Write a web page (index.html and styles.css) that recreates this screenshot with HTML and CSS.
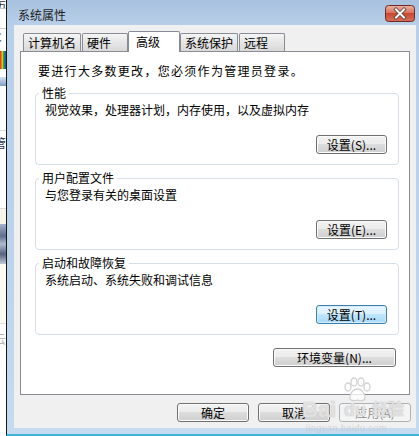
FILE: index.html
```html
<!DOCTYPE html>
<html lang="zh-CN">
<head>
<meta charset="utf-8">
<title>系统属性</title>
<link rel="stylesheet" href="styles.css">
</head>
<body>
<div class="screen">
  <div class="bgstrip">
    <div class="bg bg-a"><span class="cut">历</span></div>
    <div class="bg bg-b"></div>
    <div class="bg bg-c"><span class="cut">C</span></div>
    <div class="bg bg-d"></div>
    <div class="bg bg-e"></div>
    <div class="bg bg-f"></div>
    <div class="bg bg-g"></div>
    <div class="bg bg-h"><span class="cut blue">管</span></div>
    <div class="bg bg-i"></div>
    <div class="bg bg-j"></div>
    <div class="bg bg-k"></div>
    <div class="bg bg-l"></div>
    <div class="bg bg-m"><span class="cut gray">云</span></div>
  </div>
  <div class="window">
    <div class="titlebar">
      <span class="title">系统属性</span>
      <span class="close">
        <svg width="30" height="17" viewBox="0 0 30 17">
          <defs>
            <linearGradient id="cg" x1="0" y1="0" x2="0" y2="1">
              <stop offset="0" stop-color="#eab3a6"/>
              <stop offset="0.45" stop-color="#d9735f"/>
              <stop offset="0.5" stop-color="#c44a33"/>
              <stop offset="1" stop-color="#d5705b"/>
            </linearGradient>
          </defs>
          <rect x="0.5" y="0.5" width="29" height="16" rx="3" fill="url(#cg)" stroke="#6e2b22"/>
          <path d="M11 4.5 L19 12.5 M19 4.5 L11 12.5" stroke="#5a3a36" stroke-width="3.6" stroke-linecap="square"/>
          <path d="M11 4.5 L19 12.5 M19 4.5 L11 12.5" stroke="#ffffff" stroke-width="2" stroke-linecap="square"/>
        </svg>
      </span>
    </div>
    <div class="client">
      <div class="tabs">
        <div class="tab">计算机名</div>
        <div class="tab">硬件</div>
        <div class="tab active">高级</div>
        <div class="tab">系统保护</div>
        <div class="tab">远程</div>
      </div>
      <div class="panel">
        <p class="intro">要进行大多数更改，您必须作为管理员登录。</p>
        <fieldset class="group">
          <legend>性能</legend>
          <p class="desc">视觉效果，处理器计划，内存使用，以及虚拟内存</p>
          <div class="row"><span class="btn">设置(S)...</span></div>
        </fieldset>
        <fieldset class="group">
          <legend>用户配置文件</legend>
          <p class="desc">与您登录有关的桌面设置</p>
          <div class="row"><span class="btn">设置(E)...</span></div>
        </fieldset>
        <fieldset class="group">
          <legend>启动和故障恢复</legend>
          <p class="desc">系统启动、系统失败和调试信息</p>
          <div class="row"><span class="btn focus">设置(T)...</span></div>
        </fieldset>
        <div class="row env"><span class="btn wide">环境变量(N)...</span></div>
      </div>
      <div class="footer">
        <span class="btn">确定</span>
        <span class="btn">取消</span>
        <span class="btn disabled">应用(A)</span>
      </div>
      <div class="watermark">
        <span class="wm-bai">Bai</span>
        <svg class="wm-paw" width="30" height="26" viewBox="0 0 30 26">
          <g fill="rgba(255,255,255,0.75)" stroke="#d2d2d2" stroke-width="1.3">
            <ellipse cx="6" cy="10" rx="3" ry="4"/>
            <ellipse cx="12" cy="5" rx="3" ry="4"/>
            <ellipse cx="19" cy="5" rx="3" ry="4"/>
            <ellipse cx="25" cy="10" rx="3" ry="4"/>
            <path d="M8 21 C8 15 12 12 15.5 12 C19 12 23 15 23 21 C23 24 19 24 15.5 23 C12 24 8 24 8 21 Z"/>
          </g>
        </svg>
        <span class="wm-du">du</span>
        <span class="wm-jy">经验</span>
        <span class="wm-url">jingyan.baidu.com</span>
      </div>
    </div>
  </div>
</div>
</body>
</html>
```

FILE: styles.css
```css
* {
  box-sizing: border-box;
}

html, body {
  margin: 0;
  padding: 0;
}

body {
  width: 419px;
  height: 436px;
  overflow: hidden;
  background: #ffffff;
  color: #000000;
  font-family: "Noto Sans CJK SC", "Liberation Sans", sans-serif;
  font-size: 12px;
}

.screen {
  display: flex;
  height: 436px;
}

/* background window fragment on the left */
.bgstrip {
  width: 6px;
  display: flex;
  flex-direction: column;
  overflow: hidden;
  background: #ffffff;
}

.bg {
  flex: none;
  overflow: hidden;
}

.cut {
  display: block;
  margin-left: -6px;
  font-size: 12px;
  line-height: 12px;
  color: #333;
}

.cut.blue { color: #1d3050; }
.cut.gray { color: #b5b5b5; }

.bg-a { height: 9px; border-bottom: 1px solid #c9c9c9; }
.bg-b { height: 20px; border-bottom: 1px solid #d0d0d0; }
.bg-c { height: 22px; padding-top: 2px; }
.bg-d { height: 18px; background: linear-gradient(90deg, #d8261b 0, #f0c419 40%, #29a73d 60%, #2146b9 100%); }
.bg-e { height: 8px; }
.bg-f { height: 9px; background: linear-gradient(#d9e4f1, #7f9cc2); }
.bg-g { height: 45px; border-bottom: 1px solid #d7d7d7; }
.bg-h { height: 78px; padding-top: 6px; border-bottom: 1px solid #dcdcdc; }
.bg-i { height: 15px; background: #f7f5ea; }
.bg-j { height: 40px; background: linear-gradient(#a6b3c8, #5f6f8c 30%, #b0bccd 50%, #56637c 75%, #c2cad8); }
.bg-k { height: 60px; background: #fbfaf2; border-bottom: 1px solid #dedede; }
.bg-l { height: 9px; }
.bg-m { height: 120px; }

/* window */
.window {
  flex: 1;
  display: flex;
  flex-direction: column;
  border-left: 1px solid #161616;
  border-bottom: 2px solid #3fb4d6;
  padding: 0 3px 6px 7px;
  background: linear-gradient(180deg, #a8c1de 0, #b7cfe9 25px, #bcd3ec 60%, #c6dbf0 100%);
}

.titlebar {
  height: 25px;
  display: flex;
  justify-content: space-between;
  align-items: flex-start;
  margin: 0 -3px 0 0;
  padding: 0 4px 0 4px;
  flex: none;
}

.title {
  margin-top: 7px;
  line-height: 15px;
  font-size: 12px;
  color: #1e1e1e;
}

.close {
  display: block;
  width: 30px;
  height: 17px;
  margin-top: 5px;
}

.close svg {
  display: block;
}

.client {
  position: relative;
  flex: 1;
  display: flex;
  flex-direction: column;
  background: #f0f0f0;
  padding: 6px 6px 0 6px;
}

/* tabs */
.tabs {
  height: 20px;
  display: flex;
  align-items: flex-end;
  padding-left: 3px;
  flex: none;
}

.tab {
  height: 18px;
  min-width: 46px;
  padding: 1px 4px 0 4px;
  margin-right: 1px;
  border: 1px solid #898c95;
  border-bottom: 0;
  border-radius: 2px 2px 0 0;
  background: linear-gradient(#f5f5f5, #e6e6e6 50%, #d9d9d9);
  line-height: 15px;
  white-space: nowrap;
}

.tab.active {
  position: relative;
  z-index: 1;
  height: 21px;
  min-width: 52px;
  margin: 0 0 -1px -1px;
  padding: 2px 7px 0 7px;
  background: #ffffff;
}

/* panel */
.panel {
  height: 344px;
  flex: none;
  border: 1px solid #898c95;
  background: #ffffff;
  padding: 11px 10px 0 14px;
  display: flex;
  flex-direction: column;
}

.intro {
  margin: 0 0 2px 3px;
  line-height: 15px;
  letter-spacing: 1.3px;
}

.group {
  margin: 7px 0 0 0;
  min-width: 0;
  border: 1px solid #d5dfe5;
  border-radius: 4px;
  padding: 0 11px 10px 9px;
}

.group legend {
  margin-left: -6px;
  padding: 0 3px;
  line-height: 12px;
  font-size: 12px;
}

.desc {
  margin: 3px 0 0 0;
  line-height: 15px;
}

.row {
  display: flex;
  justify-content: flex-end;
  margin-top: 18px;
}

.row.env {
  margin-top: 13px;
  padding-right: 3px;
}

/* buttons */
.btn {
  display: block;
  width: 71px;
  height: 19px;
  border: 1px solid #707070;
  border-radius: 3px;
  background: linear-gradient(#f2f2f2 0%, #ebebeb 50%, #dddddd 50%, #cfcfcf 100%);
  box-shadow: inset 0 0 0 1px #fbfbfb;
  text-align: center;
  line-height: 17px;
  font-size: 12px;
  white-space: nowrap;
}

.btn.wide {
  width: 123px;
}

.btn.focus {
  border-color: #3c7fb1;
  background: linear-gradient(#eaf6fd 0%, #d9f0fc 50%, #bee6fd 50%, #a7d9f5 100%);
  box-shadow: inset 0 0 0 1px #d6eefb;
}

.btn.disabled {
  border-color: #adb2b5;
  background: #f4f4f4;
  box-shadow: none;
  color: #8d8d8d;
}

.footer {
  display: flex;
  justify-content: flex-end;
  gap: 9px;
  margin: 8px -1px 0 0;
}

.footer .btn {
  width: 72px;
}

/* watermark overlay */
.watermark {
  position: absolute;
  left: 286px;
  top: 350px;
  width: 110px;
  height: 52px;
  pointer-events: none;
}

.wm-bai, .wm-du, .wm-jy {
  position: absolute;
  font-family: "Liberation Sans", sans-serif;
  font-weight: bold;
  color: rgba(255, 255, 255, 0.5);
  text-shadow: 0 0 1px #c4c4c4, 0 0 1px #c4c4c4;
}

.wm-bai {
  left: 2px;
  top: 24px;
  font-size: 22px;
  line-height: 22px;
}

.wm-paw {
  position: absolute;
  left: 42px;
  top: 2px;
}

.wm-du {
  left: 44px;
  top: 26px;
  font-size: 18px;
  line-height: 18px;
}

.wm-jy {
  left: 72px;
  top: 24px;
  font-family: "Noto Sans CJK SC", sans-serif;
  font-size: 16px;
  line-height: 18px;
}

.wm-url {
  position: absolute;
  left: 6px;
  top: 48px;
  font-family: "Liberation Sans", sans-serif;
  font-size: 9px;
  line-height: 10px;
  letter-spacing: 0.5px;
  color: rgba(200, 200, 200, 0.7);
}
```
